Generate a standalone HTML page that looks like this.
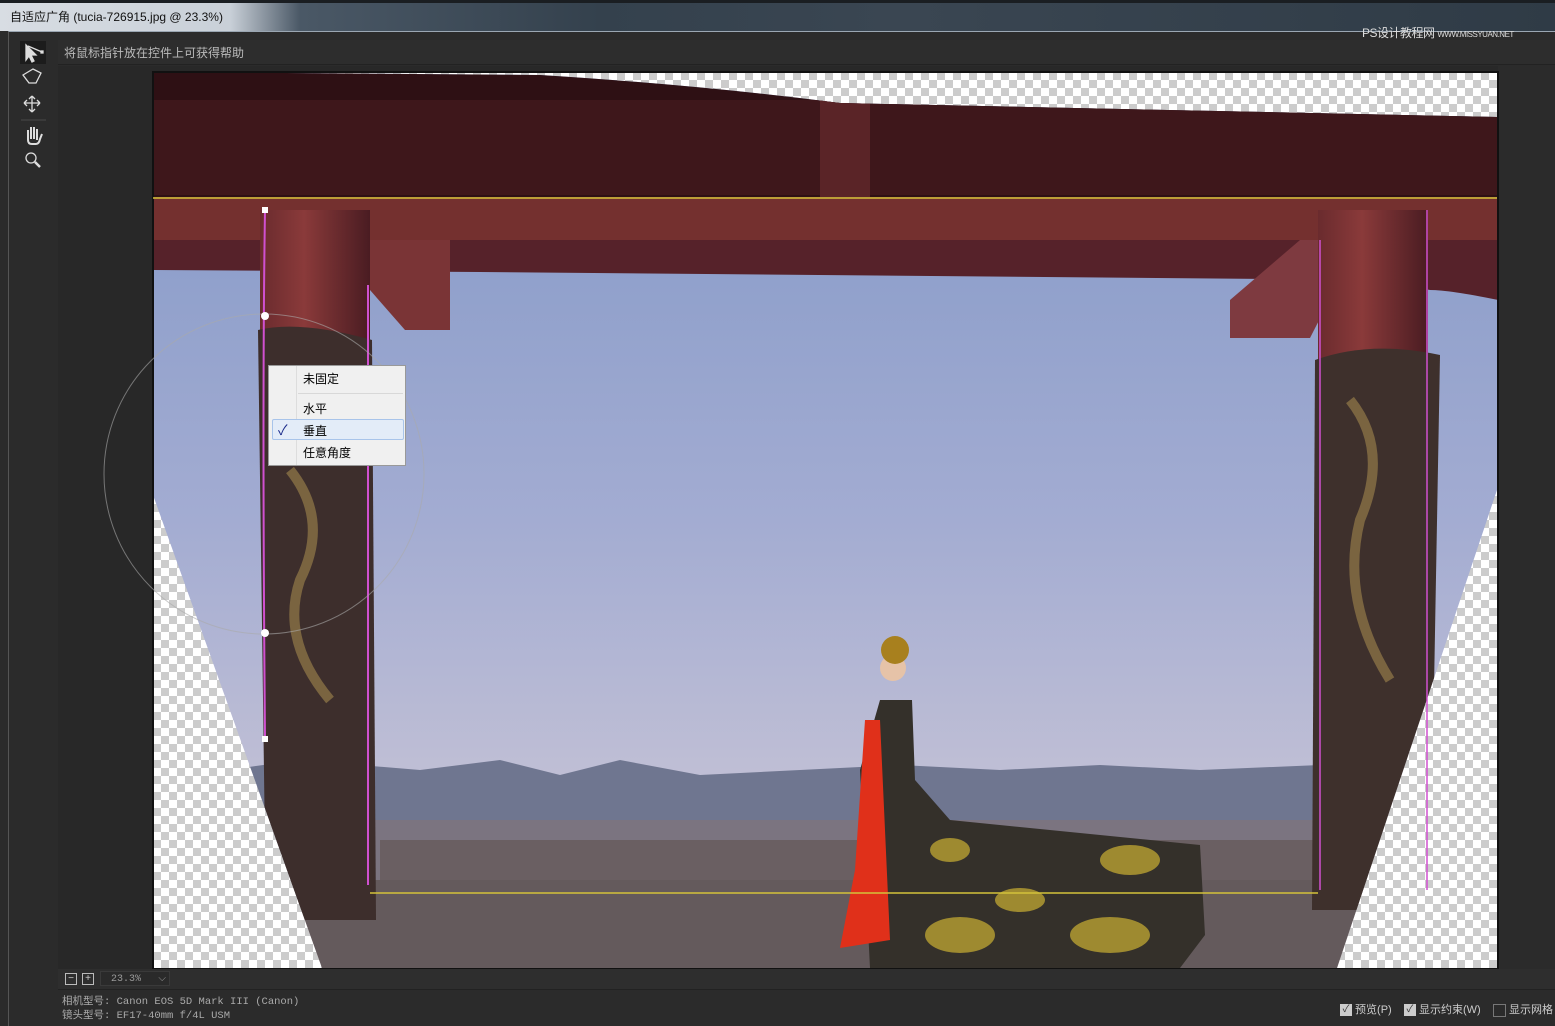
<!DOCTYPE html>
<html><head><meta charset="utf-8"><style>
body{margin:0;width:1555px;height:1025px;overflow:hidden;background:#2b2b2b;font-family:"Liberation Sans","Noto Sans CJK SC",sans-serif;position:relative}
.t{position:absolute}
</style></head><body>
<div class="t" style="left:0;top:0;width:1555px;height:31px;background:linear-gradient(90deg,#d8dde3 0,#c9d0d8 230px,#4a5866 300px,#34414d 600px,#3a4652 900px,#2f3b46 1555px)"></div>
<div class="t" style="left:0;top:0;width:1555px;height:3px;background:#1a1e22"></div>
<div class="t" style="left:10px;top:8px;font-size:12px;color:#111">自适应广角 (tucia-726915.jpg @ 23.3%)</div>
<div class="t" style="left:8px;top:31px;width:1547px;height:994px;background:#2b2b2b;border-left:1px solid #555;border-top:1px solid #9aa6b2"></div>
<div class="t" style="left:58px;top:40px;width:1497px;height:24px;background:#2d2d2d;border-bottom:1px solid #222"></div>
<div class="t" style="left:64px;top:44px;font-size:12px;color:#bbb">将鼠标指针放在控件上可获得帮助</div>
<div class="t" style="left:20px;top:41px;width:26px;height:23px;background:#1c1c1c"></div>
<svg class="t" style="left:18px;top:40px" width="32" height="135" viewBox="0 0 32 135" fill="none" stroke="#ddd" stroke-width="1.3">
<path d="M8 5 L8 20 L11 16 L14 22 L16 21 L13 15 L18 15 Z" fill="#ddd"/><path d="M10 6 L24 12" /><rect x="23" y="11" width="2" height="2" fill="#ddd"/>
<path d="M5 35 L15 29 L23 33 L18 43 L11 43 Z"/>
<path d="M14 56 V72 M6 63 H22 M14 56 l-3 3 M14 56 l3 3 M14 72 l-3 -3 M14 72 l3 -3 M6 63 l3 -3 M6 63 l3 3 M22 63 l-3 -3 M22 63 l-3 3"/>
<path d="M3 80 H28" stroke="#444"/>
<path d="M10 100 V90 M13 99 V87 M16 99 V87 M19 100 V89 M10 100 Q10 104 14 104 H18 Q21 104 22 99 L24 94" stroke-width="2"/>
<circle cx="13" cy="118" r="5"/><path d="M17 122 L22 127" stroke-width="2.5"/>
</svg>
<div class="t" style="left:58px;top:66px;width:1440px;height:907px;background:#282828"></div>
<svg class="t" style="left:0;top:0" width="1555" height="1025">
<defs>
<pattern id="ck" width="16" height="16" patternUnits="userSpaceOnUse" x="153" y="72"><rect width="16" height="16" fill="#fff"/><rect width="8" height="8" fill="#ccc"/><rect x="8" y="8" width="8" height="8" fill="#ccc"/></pattern>
<linearGradient id="sky" x1="0" y1="0" x2="0" y2="1"><stop offset="0" stop-color="#8197c6"/><stop offset="0.5" stop-color="#a3acd2"/><stop offset="0.85" stop-color="#c6c3d6"/><stop offset="1" stop-color="#cdb9c4"/></linearGradient>
<linearGradient id="pil" x1="0" y1="0" x2="1" y2="0"><stop offset="0" stop-color="#6a2b2e"/><stop offset="0.4" stop-color="#8a3a3a"/><stop offset="1" stop-color="#4a1c22"/></linearGradient>
<clipPath id="img"><path d="M153 72 L540 75 Q700 85 840 103 L1497 117 L1497 490 L1337 968 L322 968 L153 495 Z"/></clipPath>
</defs>
<rect x="153" y="72" width="1345" height="897" fill="url(#ck)"/>
<g clip-path="url(#img)">
<rect x="153" y="72" width="1345" height="897" fill="url(#sky)"/>
<rect x="153" y="72" width="1345" height="130" fill="#2e1014"/>
<rect x="153" y="100" width="1345" height="95" fill="#3e171b"/>
<rect x="820" y="100" width="50" height="100" fill="#5a2427"/>
<rect x="153" y="197" width="1345" height="45" fill="#74302f"/>
<path d="M153 240 H1498 V300 Q1450 290 1430 290 L1380 280 L480 272 L153 270 Z" fill="#56222a"/>
<path d="M370 240 L450 240 L450 330 L405 330 L370 290 Z" fill="#7a3436"/>
<path d="M1300 240 L1360 240 L1310 338 L1230 338 L1230 300 Z" fill="#7e3a40"/>
<path d="M153 780 L300 760 L420 770 L500 760 L560 775 L620 760 L700 775 L800 770 L900 765 L1000 770 L1100 765 L1200 770 L1320 765 L1320 900 L153 900 Z" fill="#6f7690"/>
<rect x="153" y="820" width="1345" height="60" fill="#7b7480"/>
<rect x="380" y="840" width="940" height="40" fill="#6a5f62"/>
<rect x="153" y="880" width="1345" height="90" fill="#645a5c"/>
<rect x="260" y="210" width="110" height="130" fill="url(#pil)"/>
<path d="M258 330 Q300 320 372 340 L376 920 L266 920 Z" fill="#3d2e2c"/>
<path d="M290 470 Q330 520 300 580 Q280 640 330 700" stroke="#7a6440" stroke-width="10" fill="none"/>
<rect x="1318" y="210" width="110" height="150" fill="url(#pil)"/>
<path d="M1315 360 Q1370 340 1440 355 L1430 910 L1312 910 Z" fill="#3e302c"/>
<path d="M1350 400 Q1390 450 1360 520 Q1340 600 1390 680" stroke="#7a6440" stroke-width="10" fill="none"/>
<path d="M880 700 L912 700 L915 780 L950 820 L1200 845 L1205 935 L1180 968 L870 968 L860 770 Z" fill="#34302a"/>
<path d="M865 720 L880 720 L890 940 L840 948 L855 870 Z" fill="#e0301a"/>
<circle cx="893" cy="668" r="13" fill="#e6c3a8"/>
<circle cx="895" cy="650" r="14" fill="#a8801e"/>
<g fill="#9e8a30"><ellipse cx="1130" cy="860" rx="30" ry="15"/><ellipse cx="960" cy="935" rx="35" ry="18"/><ellipse cx="1110" cy="935" rx="40" ry="18"/><ellipse cx="1020" cy="900" rx="25" ry="12"/><ellipse cx="950" cy="850" rx="20" ry="12"/></g>
</g>
<rect x="153" y="72" width="1345" height="897" fill="none" stroke="#111" stroke-width="2"/>
<path d="M153 198 H1497" stroke="#d4c23a" stroke-width="1.5"/>
<path d="M370 893 H1318" stroke="#d4c23a" stroke-width="1.5"/>
<path d="M265 210 Q262 400 265 738" stroke="#d050d0" stroke-width="2" fill="none"/>
<path d="M368 285 V885" stroke="#d050d0" stroke-width="2"/>
<path d="M1320 240 V890 M1427 210 V890" stroke="#d050d0" stroke-width="1.5"/>
<circle cx="264" cy="474" r="160" stroke="#aaa" fill="none" stroke-width="1" opacity="0.6"/>
<rect x="262" y="207" width="6" height="6" fill="#fff"/><rect x="262" y="736" width="6" height="6" fill="#fff"/>
<circle cx="265" cy="316" r="4" fill="#fff"/><circle cx="265" cy="633" r="4" fill="#fff"/>
</svg>
<div class="t" style="left:268px;top:365px;width:136px;height:99px;background:#f0f0f0;border:1px solid #999;font-size:12px;color:#000">
<div style="position:absolute;left:27px;top:0;width:1px;height:99px;background:#ddd"></div>
<div style="position:absolute;left:34px;top:4px">未固定</div>
<div style="position:absolute;left:29px;top:27px;width:105px;height:1px;background:#d8d8d8"></div>
<div style="position:absolute;left:34px;top:34px">水平</div>
<div style="position:absolute;left:3px;top:53px;width:130px;height:19px;background:#e3ecf8;border:1px solid #a8c4ea;border-radius:2px"></div>
<div style="position:absolute;left:9px;top:54px;color:#1a2a8a;font-size:14px">✓</div>
<div style="position:absolute;left:34px;top:56px">垂直</div>
<div style="position:absolute;left:34px;top:78px">任意角度</div>
</div>
<div class="t" style="left:58px;top:969px;width:1497px;height:20px;background:#2e2e2e;border-bottom:1px solid #222"></div>
<div class="t" style="left:65px;top:973px;width:10px;height:10px;border:1px solid #bbb;color:#ccc;font-size:10px;line-height:9px;text-align:center">−</div>
<div class="t" style="left:82px;top:973px;width:10px;height:10px;border:1px solid #bbb;color:#ccc;font-size:10px;line-height:9px;text-align:center">+</div>
<div class="t" style="left:100px;top:971px;width:70px;height:15px;border:1px solid #3a3a3a;background:#2a2a2a;color:#999;font-size:10px;font-family:'Liberation Mono',monospace;line-height:15px;padding-left:10px;box-sizing:border-box">23.3%<span style="position:absolute;right:3px">⌵</span></div>
<div class="t" style="left:62px;top:995px;font-size:10.5px;color:#aaa;font-family:'Liberation Mono','Noto Sans CJK SC',monospace;line-height:14px">相机型号: Canon EOS 5D Mark III (Canon)<br>镜头型号: EF17-40mm f/4L USM</div>
<div class="t" style="left:1340px;top:1001px;font-size:11px;color:#ccc;white-space:nowrap">
<span style="display:inline-block;width:12px;height:12px;background:#ccc;color:#333;font-size:10px;line-height:12px;text-align:center;vertical-align:middle">✓</span> 预览(P)&nbsp;&nbsp;&nbsp;
<span style="display:inline-block;width:12px;height:12px;background:#ccc;color:#333;font-size:10px;line-height:12px;text-align:center;vertical-align:middle">✓</span> 显示约束(W)&nbsp;&nbsp;&nbsp;
<span style="display:inline-block;width:11px;height:11px;border:1px solid #777;vertical-align:middle"></span> 显示网格</div>
<div class="t" style="left:1362px;top:24px;font-size:12px;color:#ddd;letter-spacing:-0.5px;white-space:nowrap">PS设计教程网 <span style="font-size:8px">WWW.MISSYUAN.NET</span></div>
</body></html>
